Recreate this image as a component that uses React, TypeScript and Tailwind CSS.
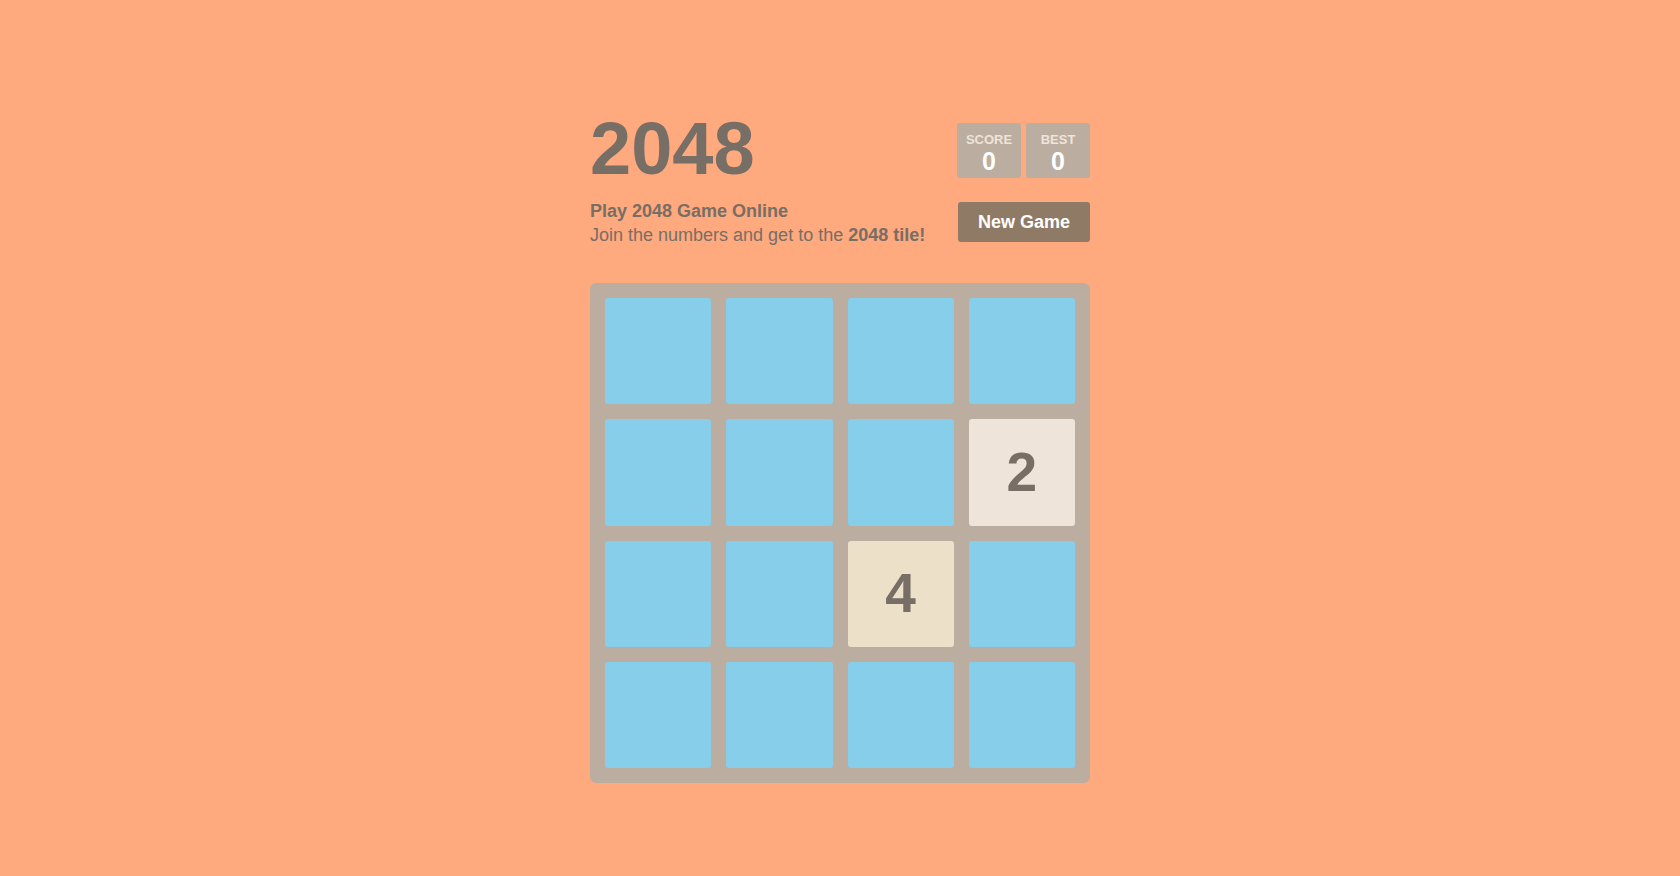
import React from 'react';

type Cell = number | null;

const board: Cell[][] = [
  [null, null, null, null],
  [null, null, null, 2],
  [null, null, 4, null],
  [null, null, null, null],
];

const tileStyles: Record<number, string> = {
  2: 'bg-[#eee4da] text-[#776e65]',
  4: 'bg-[#ede0c8] text-[#776e65]',
};

function ScoreBox({ label, value }: { label: string; value: number }) {
  return (
    <div className="flex h-[55px] w-[64px] flex-col items-center rounded-[3px] bg-[#bbada0]">
      <span className="mt-[10px] text-[13px] leading-[13px] font-bold uppercase text-[#eee4da]">{label}</span>
      <span className="mt-[3px] text-[25px] leading-[25px] font-bold text-white">{value}</span>
    </div>
  );
}

function Tile({ value }: { value: Cell }) {
  if (value === null) {
    return <div className="h-[106.25px] w-[106.25px] rounded-[3px] bg-[#87ceeb]" />;
  }
  return (
    <div
      className={`flex h-[106.25px] w-[106.25px] items-center justify-center rounded-[3px] text-[55px] font-bold ${tileStyles[value]}`}
    >
      {value}
    </div>
  );
}

export default function App() {
  return (
    <div className="min-h-screen bg-[#ffa97e] pt-[109px] font-['Liberation_Sans',Arial,sans-serif] text-[#776e65]">
      <div className="mx-auto w-[500px]">
        <div className="flex h-[90px] items-start justify-between">
          <h1 className="text-[74px] leading-[80px] font-bold">2048</h1>
          <div className="mt-[14px] flex gap-[5px]">
            <ScoreBox label="Score" value={0} />
            <ScoreBox label="Best" value={0} />
          </div>
        </div>

        <div className="flex items-start justify-between">
          <div className="text-[18px] leading-[24px]">
            <p className="font-bold">Play 2048 Game Online</p>
            <p>
              Join the numbers and get to the <strong>2048 tile!</strong>
            </p>
          </div>
          <button className="mt-[3px] h-[40px] w-[132px] rounded-[3px] bg-[#8f7a66] text-[18px] font-bold text-white">
            New Game
          </button>
        </div>

        <div className="mt-[36px] grid h-[500px] w-[500px] grid-cols-4 gap-[15px] rounded-[6px] bg-[#bbada0] p-[15px]">
          {board.flat().map((v, i) => (
            <Tile key={i} value={v} />
          ))}
        </div>
      </div>
    </div>
  );
}
